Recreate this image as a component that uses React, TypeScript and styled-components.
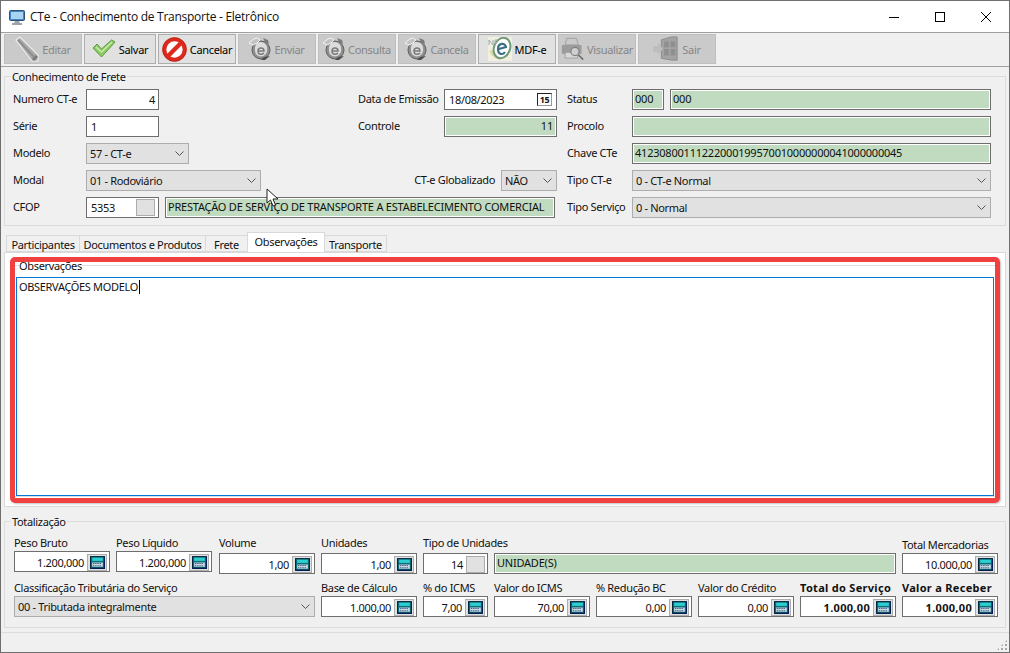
import React from 'react'
import styled, { createGlobalStyle } from 'styled-components'

const GlobalStyle = createGlobalStyle`
  html, body {
    margin: 0;
    padding: 0;
    background: #f0f0f0;
  }
  * {
    box-sizing: border-box;
  }
  svg {
    flex: none;
  }
`

// ícones da barra de ferramentas
function PencilIcon() {
  return (
    <svg width="24" height="26" viewBox="0 0 24 26">
      <path d="M1 4 L5 1 L23 19 L23 25 L17 25 Z" fill="#ababab" stroke="#ececec" strokeWidth="1.2" />
      <path d="M3 4 L19 21" stroke="#8e8e8e" strokeWidth="2" />
      <path d="M18 24 L22 20" stroke="#7c7c7c" strokeWidth="3" />
    </svg>
  )
}

function CheckIcon() {
  return (
    <svg width="24" height="20" viewBox="0 0 24 20">
      <path d="M1 9 L5 5 L9.5 10 L19.5 1 L23 3 L9.5 18 Z" fill="#8ecb62" stroke="#5c9a45" strokeWidth="1" />
      <path d="M4 8 L9.5 13 L20 3" fill="none" stroke="#cdf0b5" strokeWidth="1.2" />
    </svg>
  )
}

function CancelIcon() {
  return (
    <svg width="25" height="25" viewBox="0 0 26 26">
      <circle cx="13" cy="13" r="10.5" fill="#fff" stroke="#dd2a1c" strokeWidth="4" />
      <path d="M6 20 L20 6" stroke="#dd2a1c" strokeWidth="4.5" />
      <circle cx="13" cy="13" r="12.4" fill="none" stroke="#b01d12" strokeWidth="0.8" />
    </svg>
  )
}

function GlobeIcon() {
  return (
    <svg width="22" height="24" viewBox="0 0 22 24">
      <circle cx="12" cy="13" r="9" fill="#8f8f8f" stroke="#5f5f5f" />
      <path d="M8 6 C14 3 19 7 18 14 C17 20 10 21 7 17 C5 13 6 8 8 6 Z" fill="#dcdcdc" />
      <path d="M9 14 H15 C15 10 9 10 9 14 C9 18 13 18 15 16" fill="none" stroke="#7a7a7a" strokeWidth="1.5" />
      <path d="M0 6 L5 2 L8 1 L11 3 L8 6 L4 8 Z" fill="#c2c2c2" stroke="#f4f4f4" />
      <path d="M14 1 L19 3 L20 7 L16 5 Z" fill="#7a7a7a" />
      <path d="M15 20 L21 19 L16 23 L12 23 Z" fill="#4f4f4f" />
    </svg>
  )
}

function NfeIcon() {
  return (
    <svg width="24" height="24" viewBox="0 0 24 24">
      <rect width="24" height="24" fill="#f1efdf" />
      <path d="M1 14 C4 22 14 26 19 18 L12 12 Z" fill="#e3dba4" />
      <ellipse cx="14" cy="11" rx="8" ry="10.5" fill="#fff" stroke="#6f9a78" strokeWidth="2" transform="rotate(22 14 11)" />
      <path d="M11 12 L18 10 C17 5 10 6 10 12 C10 18 15 18 17 15" fill="none" stroke="#3a6f86" strokeWidth="2.2" />
      <path d="M1 3 V8 M1 3 L5 8 V3 M7 8 V3 H10 M7 5.5 H9.5" fill="none" stroke="#9aa8ad" strokeWidth="1" />
    </svg>
  )
}

function PrinterIcon() {
  return (
    <svg width="23" height="24" viewBox="0 0 28 28">
      <path d="M7 1 H19 L21 9 H5 Z" fill="#c9c9c9" stroke="#9a9a9a" />
      <rect x="1" y="9" width="24" height="11" rx="1" fill="#9c9c9c" />
      <rect x="5" y="18" width="15" height="7" fill="#d8d8d8" stroke="#9a9a9a" />
      <circle cx="17" cy="17" r="5" fill="#cfcfcf" stroke="#7f7f7f" strokeWidth="1.4" />
      <path d="M21 21 L27 27" stroke="#6e6e6e" strokeWidth="2" />
    </svg>
  )
}

function DoorIcon() {
  return (
    <svg width="26" height="26" viewBox="0 0 28 26">
      <path d="M9 3 L20 0 H26 V25 H20 L9 23 Z" fill="#a3a3a3" stroke="#8a8a8a" />
      <path d="M12 5 H17 V11 H12 Z M19 5 H24 V11 H19 Z M12 13 H17 V20 H12 Z M19 13 H24 V20 H19 Z" fill="#8f8f8f" />
      <path d="M0 10 H5 V6 L11 13 L5 19 V16 H0 Z" fill="#bdbdbd" />
    </svg>
  )
}

function CalcIcon() {
  return (
    <svg width="15" height="13" viewBox="0 0 14 12">
      <rect x="0.5" y="0.5" width="13" height="11" fill="#0f6f78" stroke="#06263f" />
      <rect x="2" y="1.5" width="10" height="3" fill="#2cd0d0" />
      <rect x="2" y="6" width="10" height="4" fill="#c5d8e2" />
      <path d="M3 7 H11 M3 9 H11" stroke="#243a6a" strokeDasharray="1 1" />
      <path d="M1 11.5 H14 M13.5 1 V12" stroke="#031c52" />
    </svg>
  )
}

function Chevron() {
  return (
    <svg width="9" height="5" viewBox="0 0 9 5">
      <path d="M0.5 0.5 L4.5 4.5 L8.5 0.5" fill="none" stroke="#555" strokeWidth="1" />
    </svg>
  )
}

const Window = styled.div`
  position: relative;
  width: 1010px;
  height: 653px;
  display: flex;
  flex-direction: column;
  background: #f0f0f0;
  border: 1px solid #6f6f6f;
  overflow: hidden;
  font-family: 'Noto Sans', 'Liberation Sans', sans-serif;
  font-size: 11px;
  letter-spacing: -0.33px;
  color: #111;
`

const TitleBar = styled.div`
  height: 32px;
  flex: none;
  display: flex;
  align-items: center;
  background: #fff;
  border-bottom: 1px solid #a0a0a0;
  padding-left: 8px;
  font-size: 12px;
`

const TitleText = styled.span`
  margin-left: 5px;
  flex: 1;
  font-family: 'Open Sans', 'Noto Sans', sans-serif;
  letter-spacing: -0.27px;
`

const WinButton = styled.div`
  width: 46px;
  height: 31px;
  display: flex;
  align-items: center;
  justify-content: center;
`

const Toolbar = styled.div`
  height: 34px;
  flex: none;
  display: flex;
  gap: 2px;
  padding: 1px 0 0 3px;
  border-bottom: 1px solid #a0a0a0;
`

const ToolButton = styled.div<{ $disabled?: boolean; $w: number }>`
  width: ${(p) => p.$w}px;
  height: 30px;
  display: flex;
  align-items: center;
  justify-content: center;
  gap: 3px;
  white-space: nowrap;
  background: ${(p) => (p.$disabled ? '#cacaca' : '#e1e1e1')};
  border: 1px solid ${(p) => (p.$disabled ? '#bfbfbf' : '#adadad')};
  color: ${(p) => (p.$disabled ? '#868686' : '#000')};
`

const Group = styled.fieldset`
  margin: 0 3px;
  min-width: 0;
  border: 1px solid #dcdcdc;
  padding: 0;
`

const GroupTitle = styled.legend`
  margin-left: -2px;
  padding: 0 1px;
  line-height: 13px;
  font-size: 11px;
`

const TotalsTitle = styled(GroupTitle)`
  margin-left: -3px;
`

const HeaderGroup = styled(Group)`
  margin-top: 3px;
  padding: 6px 8px 7px 8px;
`

const HeaderGrid = styled.div`
  display: grid;
  grid-template-columns: 73px 73px 6px 24px 72px 97px 86px 57px 56px 10px 65px 32px 6px 321px;
  grid-auto-rows: 21px;
  row-gap: 6px;
`

const Label = styled.div<{ $col?: string; $end?: boolean }>`
  grid-column: ${(p) => p.$col || 'auto'};
  display: flex;
  align-items: center;
  justify-content: ${(p) => (p.$end ? 'flex-end' : 'flex-start')};
  padding-right: ${(p) => (p.$end ? 6 : 0)}px;
  white-space: nowrap;
  padding-bottom: 2px;
`

const Input = styled.div<{ $col?: string; $right?: boolean; $bold?: boolean }>`
  grid-column: ${(p) => p.$col || 'auto'};
  height: 21px;
  display: flex;
  align-items: center;
  justify-content: ${(p) => (p.$right ? 'flex-end' : 'flex-start')};
  padding: 0 3px 0 ${(p) => (p.$right ? 3 : 4)}px;
  background: #fff;
  border: 1px solid #6e6e6e;
  font-weight: ${(p) => (p.$bold ? 700 : 400)};
  letter-spacing: ${(p) => (p.$bold ? '0.3px' : 'inherit')};
  white-space: nowrap;
  overflow: hidden;
`

const MoneyBox = styled(Input)`
  padding-top: 1px;
`

const GreenInput = styled(Input)`
  background: #c0dbc0;
  box-shadow: inset 0 0 0 1px #fff;
  padding: 0 3px 2px 2px;
  letter-spacing: -0.22px;
`

const DescriptionInput = styled(GreenInput)`
  margin-right: 2px;
`

const Select = styled.div<{ $col?: string }>`
  grid-column: ${(p) => p.$col || 'auto'};
  height: 21px;
  display: flex;
  align-items: center;
  justify-content: space-between;
  padding: 0 4px 0 3px;
  background: #e1e1e1;
  border: 1px solid #adadad;
  white-space: nowrap;
`

const DateIcon = styled.span`
  width: 15px;
  height: 13px;
  margin-left: auto;
  margin-right: 1px;
  display: flex;
  align-items: center;
  justify-content: center;
  background: #fff;
  border: 1px solid #222;
  border-right-color: #999;
  border-bottom-color: #999;
  font-size: 9px;
  line-height: 1;
  font-weight: 700;
`

const CodeGap = styled.span`
  width: 19px;
  height: 17px;
  margin-left: auto;
  background: #e1e1e1;
  border: 1px solid #adadad;
`

const UnitGap = styled(CodeGap)`
  margin-left: 3px;
  margin-right: -1px;
`

const CalcButton = styled.span`
  width: 20px;
  height: 17px;
  flex: none;
  margin-left: 3px;
  margin-right: -1px;
  display: flex;
  align-items: center;
  justify-content: center;
  background: #e1e1e1;
  border: 1px solid #adadad;
`

const Tabs = styled.div`
  margin: 6px 3px 0 3px;
  height: 20px;
  flex: none;
  display: flex;
  align-items: flex-end;
  padding-left: 2px;
`

const Tab = styled.div<{ $active?: boolean; $w: number }>`
  width: ${(p) => p.$w}px;
  height: ${(p) => (p.$active ? 21 : 17)}px;
  margin-bottom: ${(p) => (p.$active ? -1 : 0)}px;
  padding: ${(p) => (p.$active ? '0 0 3px' : '1px 0 0')};
  display: flex;
  align-items: center;
  justify-content: center;
  background: ${(p) => (p.$active ? '#fff' : '#f0f0f0')};
  border: 1px solid #d9d9d9;
  border-bottom: ${(p) => (p.$active ? 'none' : '1px solid #d9d9d9')};
  margin-right: -1px;
  position: relative;
  white-space: nowrap;
`

const Pane = styled.div`
  position: relative;
  margin: 0 3px;
  height: 255px;
  flex: none;
  background: #fff;
  border: 1px solid #d9d9d9;
  padding: 6px 9px 9px 9px;
`

const Note = styled.fieldset`
  height: 100%;
  margin: 0;
  padding: 0;
  border: 1px solid #dcdcdc;
  display: flex;
  flex-direction: column;
`

const NoteTitle = styled.legend`
  margin-left: 4px;
  padding: 0;
  line-height: 13px;
`

const TextArea = styled.div`
  height: 220px;
  margin: 5px 1px 0 1px;
  border: 1px solid #0078d7;
  padding: 2px 2px;
  line-height: 14px;
`

const Caret = styled.span`
  display: inline-block;
  width: 1px;
  height: 14px;
  margin-left: 1px;
  background: #000;
  vertical-align: top;
`

// marcação vermelha por cima do print
const Highlight = styled.div`
  position: absolute;
  left: 5px;
  top: 4px;
  right: 5px;
  bottom: 3px;
  border: 5px solid #f04040;
  border-radius: 5px;
  box-shadow: 1px 1px 2px rgba(0, 0, 0, 0.25);
  pointer-events: none;
`

const TotalsGroup = styled(Group)`
  margin-top: 8px;
  padding: 8px 7px 10px 9px;
`

const TotalsRow = styled.div`
  display: flex;
  align-items: flex-end;
  gap: 6px;
`

const SecondRow = styled(TotalsRow)`
  margin-top: 7px;
`

const Cell = styled.div<{ $w: number; $gap?: number; $lift?: number; $shift?: number }>`
  width: ${(p) => p.$w}px;
  flex: none;
  display: flex;
  flex-direction: column;
  gap: ${(p) => p.$gap ?? 2}px;
  margin-bottom: ${(p) => p.$lift || 0}px;
  margin-left: ${(p) => p.$shift || 0}px;
`

const CellLabel = styled.div<{ $bold?: boolean }>`
  line-height: 13px;
  height: 13px;
  white-space: nowrap;
  font-weight: ${(p) => (p.$bold ? 700 : 400)};
  letter-spacing: ${(p) => (p.$bold ? '0.3px' : 'inherit')};
`

const Description = styled(GreenInput)`
  width: 402px;
  flex: none;
`

const FooterLine = styled.div`
  margin-top: 4px;
  flex: 1;
  border-top: 1px solid #dcdcdc;
`

const Grip = styled.div`
  position: absolute;
  right: 1px;
  bottom: 1px;
  width: 12px;
  height: 12px;
  background-image: radial-gradient(#a8a8a8 1px, transparent 1.2px);
  background-size: 4px 4px;
  clip-path: polygon(100% 0, 100% 100%, 0 100%);
`

const Pointer = styled.svg`
  position: absolute;
  left: 265px;
  top: 187px;
`

function Money({ value, bold }: { value: string; bold?: boolean }) {
  return (
    <MoneyBox $right $bold={bold}>
      {value}
      <CalcButton>
        <CalcIcon />
      </CalcButton>
    </MoneyBox>
  )
}

export default function App() {
  return (
    <>
      <GlobalStyle />
      <Window>
        <TitleBar>
          <svg width="16" height="16" viewBox="0 0 16 16">
            <rect x="0.5" y="1.5" width="15" height="10" rx="1" fill="#3f87c9" stroke="#33506e" />
            <rect x="2" y="3" width="12" height="7" fill="#a9d3f2" />
            <path d="M6 12 H10 L11 14 H5 Z" fill="#9aa5ad" />
            <path d="M3 15 H13" stroke="#7c8790" strokeWidth="1.5" />
          </svg>
          <TitleText>CTe - Conhecimento de Transporte - Eletrônico</TitleText>
          <WinButton>
            <svg width="10" height="10" viewBox="0 0 10 10">
              <path d="M0 5.5 H10" stroke="#000" />
            </svg>
          </WinButton>
          <WinButton>
            <svg width="10" height="10" viewBox="0 0 10 10">
              <rect x="0.5" y="0.5" width="9" height="9" fill="none" stroke="#000" />
            </svg>
          </WinButton>
          <WinButton>
            <svg width="10" height="10" viewBox="0 0 10 10">
              <path d="M0 0 L10 10 M10 0 L0 10" stroke="#000" />
            </svg>
          </WinButton>
        </TitleBar>

        <Toolbar>
          <ToolButton $disabled $w={78}>
            <PencilIcon />
            Editar
          </ToolButton>
          <ToolButton $w={72}>
            <CheckIcon />
            Salvar
          </ToolButton>
          <ToolButton $w={78}>
            <CancelIcon />
            Cancelar
          </ToolButton>
          <ToolButton $disabled $w={78}>
            <GlobeIcon />
            Enviar
          </ToolButton>
          <ToolButton $disabled $w={78}>
            <GlobeIcon />
            Consulta
          </ToolButton>
          <ToolButton $disabled $w={78}>
            <GlobeIcon />
            Cancela
          </ToolButton>
          <ToolButton $w={78}>
            <NfeIcon />
            MDF-e
          </ToolButton>
          <ToolButton $disabled $w={78}>
            <PrinterIcon />
            Visualizar
          </ToolButton>
          <ToolButton $disabled $w={78}>
            <DoorIcon />
            Sair
          </ToolButton>
        </Toolbar>

        <HeaderGroup>
          <GroupTitle>Conhecimento de Frete</GroupTitle>
          <HeaderGrid>
            <Label $col="1">Numero CT-e</Label>
            <Input $col="2" $right>4</Input>
            <Label $col="7">Data de Emissão</Label>
            <Input $col="8 / 10">
              18/08/2023
              <DateIcon>15</DateIcon>
            </Input>
            <Label $col="11">Status</Label>
            <GreenInput $col="12">000</GreenInput>
            <GreenInput $col="14">000</GreenInput>

            <Label $col="1">Série</Label>
            <Input $col="2">1</Input>
            <Label $col="7">Controle</Label>
            <GreenInput $col="8 / 10" $right>11</GreenInput>
            <Label $col="11">Procolo</Label>
            <GreenInput $col="12 / 15" />

            <Label $col="1">Modelo</Label>
            <Select $col="2 / 5">
              57 - CT-e
              <Chevron />
            </Select>
            <Label $col="11">Chave CTe</Label>
            <GreenInput $col="12 / 15">41230800111222000199570010000000041000000045</GreenInput>

            <Label $col="1">Modal</Label>
            <Select $col="2 / 6">
              01 - Rodoviário
              <Chevron />
            </Select>
            <Label $col="7 / 9" $end>CT-e Globalizado</Label>
            <Select $col="9">
              NÃO
              <Chevron />
            </Select>
            <Label $col="11">Tipo CT-e</Label>
            <Select $col="12 / 15">
              0 - CT-e Normal
              <Chevron />
            </Select>

            <Label $col="1">CFOP</Label>
            <Input $col="2">
              5353
              <CodeGap />
            </Input>
            <DescriptionInput $col="4 / 10">PRESTAÇÃO DE SERVIÇO DE TRANSPORTE A ESTABELECIMENTO COMERCIAL</DescriptionInput>
            <Label $col="11">Tipo Serviço</Label>
            <Select $col="12 / 15">
              0 - Normal
              <Chevron />
            </Select>
          </HeaderGrid>
        </HeaderGroup>

        <Tabs>
          <Tab $w={74}>Participantes</Tab>
          <Tab $w={127}>Documentos e Produtos</Tab>
          <Tab $w={43}>Frete</Tab>
          <Tab $active $w={78}>Observações</Tab>
          <Tab $w={63}>Transporte</Tab>
        </Tabs>
        <Pane>
          <Note>
            <NoteTitle>Observações</NoteTitle>
            <TextArea>
              OBSERVAÇÕES MODELO
              <Caret />
            </TextArea>
          </Note>
          <Highlight />
        </Pane>

        <TotalsGroup>
          <TotalsTitle>Totalização</TotalsTitle>
          <TotalsRow>
            <Cell $w={96} $lift={2}>
              <CellLabel>Peso Bruto</CellLabel>
              <Money value="1.200,000" />
            </Cell>
            <Cell $w={96} $lift={2}>
              <CellLabel>Peso Líquido</CellLabel>
              <Money value="1.200,000" />
            </Cell>
            <Cell $w={96} $gap={4} $shift={1}>
              <CellLabel>Volume</CellLabel>
              <Money value="1,00" />
            </Cell>
            <Cell $w={96} $gap={4}>
              <CellLabel>Unidades</CellLabel>
              <Money value="1,00" />
            </Cell>
            <Cell $w={65} $gap={4}>
              <CellLabel>Tipo de Unidades</CellLabel>
              <MoneyBox $right>
                14
                <UnitGap />
              </MoneyBox>
            </Cell>
            <Description>UNIDADE(S)</Description>
            <Cell $w={96}>
              <CellLabel>Total Mercadorias</CellLabel>
              <Money value="10.000,00" />
            </Cell>
          </TotalsRow>
          <SecondRow>
            <Cell $w={301}>
              <CellLabel>Classificação Tributária do Serviço</CellLabel>
              <Select>
                00 - Tributada integralmente
                <Chevron />
              </Select>
            </Cell>
            <Cell $w={96}>
              <CellLabel>Base de Cálculo</CellLabel>
              <Money value="1.000,00" />
            </Cell>
            <Cell $w={65}>
              <CellLabel>% do ICMS</CellLabel>
              <Money value="7,00" />
            </Cell>
            <Cell $w={96}>
              <CellLabel>Valor do ICMS</CellLabel>
              <Money value="70,00" />
            </Cell>
            <Cell $w={96}>
              <CellLabel>% Redução BC</CellLabel>
              <Money value="0,00" />
            </Cell>
            <Cell $w={96}>
              <CellLabel>Valor do Crédito</CellLabel>
              <Money value="0,00" />
            </Cell>
            <Cell $w={96}>
              <CellLabel $bold>Total do Serviço</CellLabel>
              <Money value="1.000,00" bold />
            </Cell>
            <Cell $w={96}>
              <CellLabel $bold>Valor a Receber</CellLabel>
              <Money value="1.000,00" bold />
            </Cell>
          </SecondRow>
        </TotalsGroup>
        <FooterLine />
        <Grip />
        <Pointer width="14" height="20" viewBox="0 0 14 20">
          <path d="M1 1 V15 L4.5 12 L7 18 L9.5 17 L7 11 H12 Z" fill="#fff" stroke="#222" strokeWidth="1" />
        </Pointer>
      </Window>
    </>
  )
}
